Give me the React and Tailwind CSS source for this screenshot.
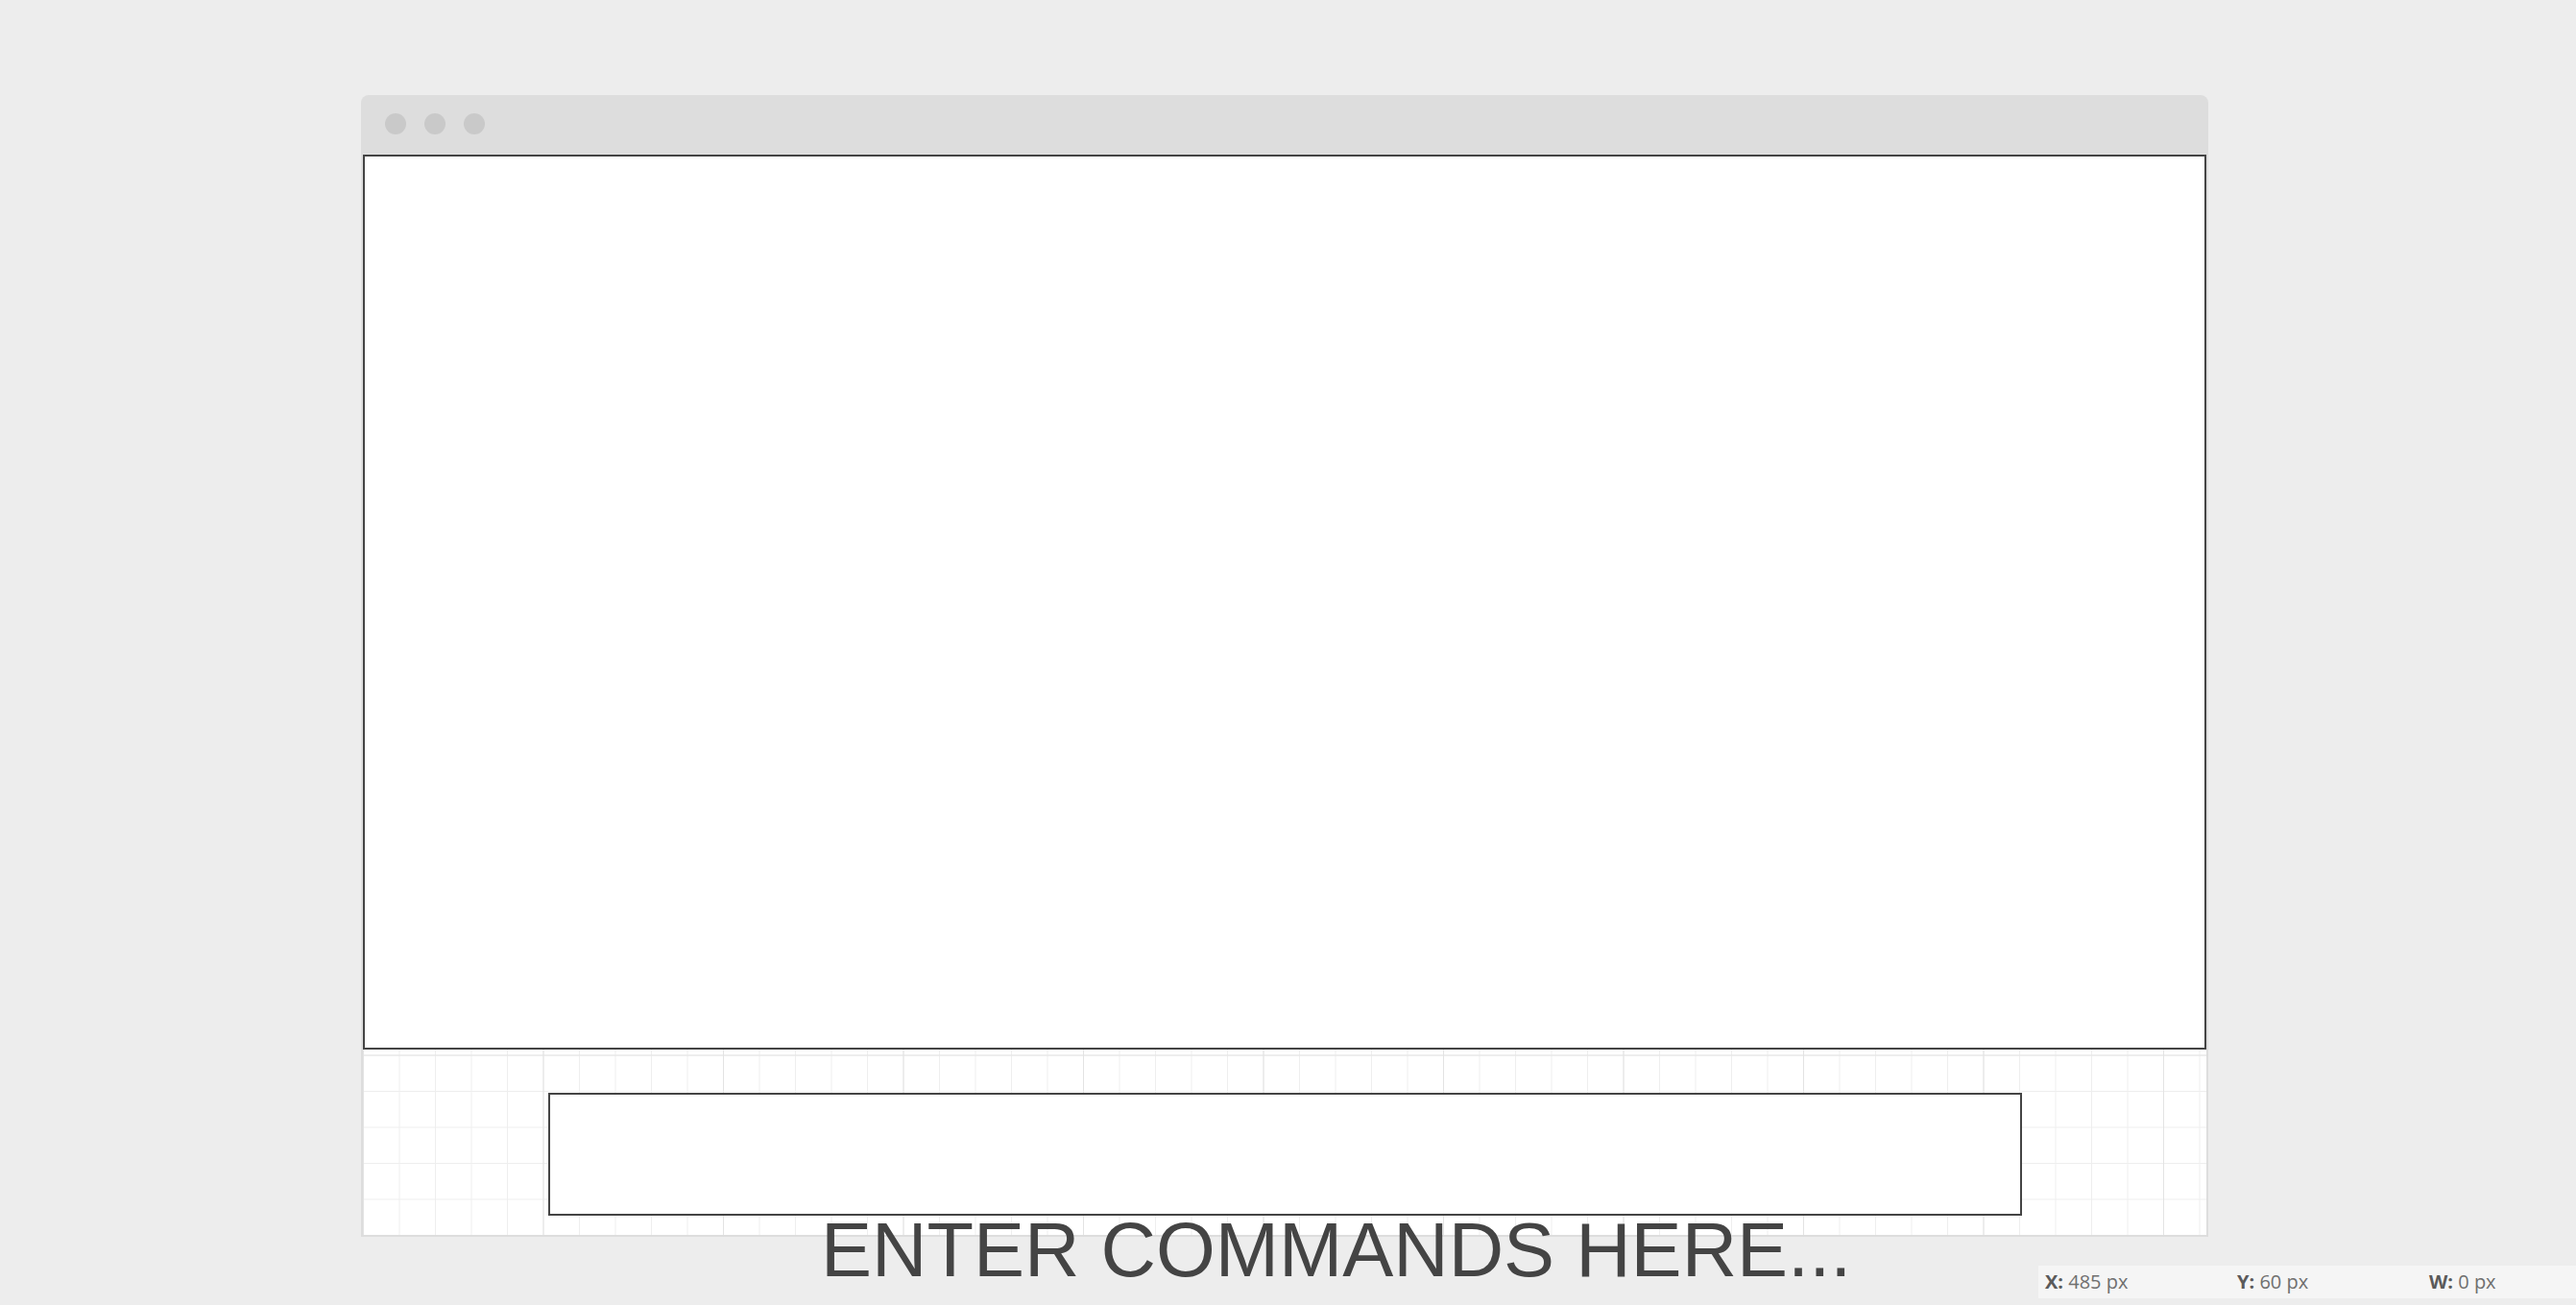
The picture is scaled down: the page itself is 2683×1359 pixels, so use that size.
import React from "react";

const GRID_BG =
  "bg-[linear-gradient(to_right,#e3e3e3_1px,transparent_1px),linear-gradient(to_bottom,#e3e3e3_1px,transparent_1px),linear-gradient(to_right,#eeeeee_1px,transparent_1px),linear-gradient(to_bottom,#eeeeee_1px,transparent_1px)] bg-[size:187.5px_187.5px,187.5px_187.5px,37.5px_37.5px,37.5px_37.5px]";

const readout = [
  { label: "X:", value: "485 px" },
  { label: "Y:", value: "60 px" },
  { label: "W:", value: "0 px" },
];

export default function App() {
  return (
    <div className="min-h-screen bg-[#ededed] pt-[99px] overflow-hidden">
      {/* Browser window */}
      <div className="ml-[376px] w-[1924px] rounded-t-[8px] bg-[#dddddd] px-[2px] pb-[2px]">
        <div className="h-[62px] flex items-start gap-[19px] pl-[23px] pt-[19px]">
          <span className="w-[22px] h-[22px] rounded-full bg-[#c9c9c9]" />
          <span className="w-[22px] h-[22px] rounded-full bg-[#c9c9c9]" />
          <span className="w-[22px] h-[22px] rounded-full bg-[#c9c9c9]" />
        </div>

        <div className={`h-[1125px] bg-white ${GRID_BG}`}>
          {/* Output area */}
          <div className="h-[932px] border-2 border-[#444444] bg-white" />
          {/* Command input */}
          <div className="mt-[45px] mx-auto w-[1535px] h-[128px] border-2 border-[#444444] bg-white" />
        </div>
      </div>

      {/* Placeholder text spilling below the window */}
      <div className="relative -mt-[26px] ml-[855px] whitespace-nowrap text-[79.5px] leading-none text-[#444444] font-['Liberation_Sans',Arial,sans-serif]">
        ENTER COMMANDS HERE...
      </div>

      {/* Coordinates readout */}
      <div className="fixed right-0 bottom-[7px] w-[560px] h-[34px] bg-[#f5f5f5] flex items-center pl-[7px] overflow-hidden text-[20px] font-['Open_Sans',sans-serif]">
        {readout.map((r) => (
          <div key={r.label} className="w-[200px] shrink-0 whitespace-nowrap">
            <span className="font-bold text-[#5a5a5a]">{r.label}</span>{" "}
            <span className="text-[#6f6f6f]">{r.value}</span>
          </div>
        ))}
      </div>
    </div>
  );
}
